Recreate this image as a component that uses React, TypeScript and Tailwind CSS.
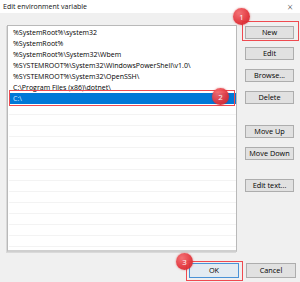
import React from "react"

const paths = [
  "%SystemRoot%\\system32",
  "%SystemRoot%",
  "%SystemRoot%\\System32\\Wbem",
  "%SYSTEMROOT%\\System32\\WindowsPowerShell\\v1.0\\",
  "%SYSTEMROOT%\\System32\\OpenSSH\\",
  "C:\\Program Files (x86)\\dotnet\\",
]

function WinButton({ label, className = "" }: { label: string; className?: string }) {
  return (
    <div
      className={`h-[13px] w-[49px] flex items-center justify-center border border-[#adadad] bg-[#e1e1e1] text-[7.3px] text-black ${className}`}
    >
      {label}
    </div>
  )
}

function Badge({ n, className }: { n: number; className: string }) {
  return (
    <div
      className={`absolute w-[17px] h-[17px] rounded-full bg-[radial-gradient(circle_at_35%_30%,#f46a6e,#e2333a_60%,#c9262d)] opacity-95 shadow-[0_0_2px_rgba(200,0,0,0.5)] flex items-center justify-center text-white text-[8px] ${className}`}
    >
      {n}
    </div>
  )
}

export default function App() {
  return (
    <div
      className="relative w-[300px] h-[282px] bg-[#f0f0f0] overflow-hidden text-black"
      style={{ fontFamily: '"Open Sans", "Liberation Sans", sans-serif' }}
    >
      {/* Title bar */}
      <div className="h-[13px] bg-white flex items-center justify-between pl-[3px] pr-[7px]">
        <span className="text-[7px] leading-none text-[#111]">Edit environment variable</span>
        <span className="text-[10px] leading-none font-light text-[#333]">×</span>
      </div>

      <div className="flex pl-[7px] pt-[12px]">
        {/* Path list */}
        <div className="w-[230px] h-[227px] bg-white border border-[#b9b9b9] border-b-[2px] border-b-[#cfcfcf] shadow-[-1px_1px_0_#d9d9d9] pt-[1px] pl-[1px] overflow-hidden">
          {paths.map((p) => (
            <div key={p} className="h-[11px] flex items-center pl-[4px] text-[7px] leading-none whitespace-nowrap text-black">
              {p}
            </div>
          ))}
          <div className="h-[11px] flex items-center pl-[4px] text-[7px] leading-none bg-[#0078d7] text-[#dbeaff]">
            C:\
          </div>
          {Array.from({ length: 13 }).map((_, i) => (
            <div key={i} className="h-[11px] border-b border-[#f3f3f3]" />
          ))}
        </div>

        {/* Button column */}
        <div className="ml-[8px] flex flex-col">
          <WinButton label="New" className="mt-[1px]" />
          <WinButton label="Edit" className="mt-[8px]" />
          <WinButton label="Browse..." className="mt-[9px]" />
          <WinButton label="Delete" className="mt-[9px]" />
          <WinButton label="Move Up" className="mt-[21px]" />
          <WinButton label="Move Down" className="mt-[9px]" />
          <WinButton label="Edit text..." className="mt-[19px]" />
        </div>
      </div>

      {/* Bottom buttons */}
      <div className="flex justify-end gap-[7px] pr-[4px] mt-[11px]">
        <div className="h-[15px] w-[50px] flex items-center justify-center border border-[#4a92d6] bg-[#e3ebf2] text-[7.3px] text-black">
          OK
        </div>
        <div className="h-[15px] w-[50px] flex items-center justify-center border border-[#adadad] bg-[#e1e1e1] text-[7.3px] text-black">
          Cancel
        </div>
      </div>

      {/* Annotations */}
      <div className="absolute left-[242px] top-[21px] w-[57px] h-[20px] border-[1.5px] border-[#ef4a50]" />
      <div className="absolute left-[9px] top-[90px] w-[226px] h-[16px] border-[1.5px] border-[#ef4a50]" />
      <div className="absolute left-[186px] top-[261px] w-[57px] h-[20px] border-[1.5px] border-[#ef4a50]" />
      <Badge n={1} className="left-[233px] top-[8px]" />
      <Badge n={2} className="left-[212px] top-[88px]" />
      <Badge n={3} className="left-[176px] top-[253px]" />
    </div>
  )
}
